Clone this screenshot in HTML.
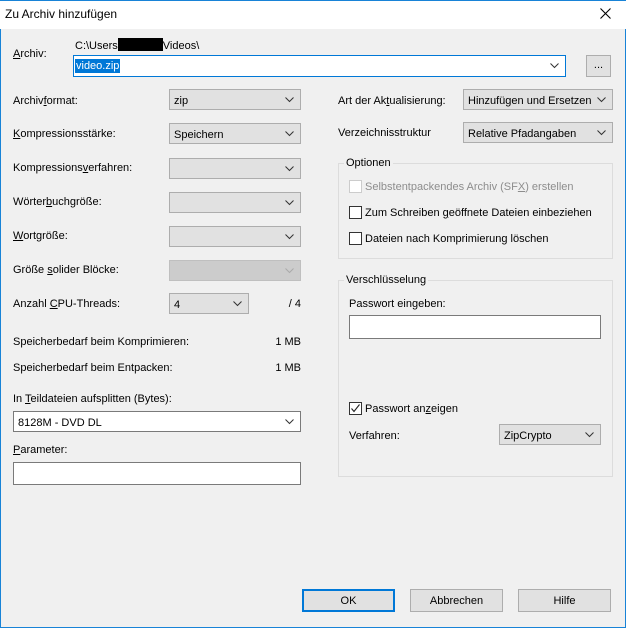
<!DOCTYPE html>
<html><head><meta charset="utf-8"><style>
*{box-sizing:border-box;margin:0;padding:0}
body{width:626px;height:628px;position:relative;background:#f0f0f0;font-family:"Liberation Sans",sans-serif;font-size:11px;color:#000;overflow:hidden}
.win{position:absolute;left:0;top:0;width:626px;height:628px;border:1px solid #1883d7;border-top:none}
.title{position:absolute;left:0;top:0;width:626px;height:29px;background:#fff;border-top:1px solid #1883d7}
.t{position:absolute;line-height:16px;white-space:nowrap}
.cb{position:absolute;height:21px;background:#e1e1e1;border:1px solid #adadad}
.cb span{position:absolute;left:4px;top:4px;line-height:14px}
.cb svg{position:absolute;right:6px;top:7px}
.dis{background:#cccccc;border-color:#bfbfbf}
.white{background:#fff;border-color:#7a7a7a}
.inp{position:absolute;background:#fff;border:1px solid #7a7a7a}
.grp{position:absolute;border:1px solid #dcdcdc}
.chk{position:absolute;width:13px;height:13px;border:1px solid #333;background:#fff}
.btn{position:absolute;height:23px;width:93px;background:#e1e1e1;border:1px solid #adadad;text-align:center;line-height:22px}
u{text-decoration:underline}
</style></head><body>
<div class="win"></div>
<div class="title"></div>
<div class="t" style="left:5px;top:6px;font-size:12px">Zu Archiv hinzufügen</div>
<svg style="position:absolute;left:600px;top:8px" width="11" height="11"><path d="M0.5 0.5L10.5 10.5M10.5 0.5L0.5 10.5" stroke="#000" stroke-width="1.1"/></svg>

<div class="t" style="left:13px;top:46px"><u>A</u>rchiv:</div>
<div class="t" style="left:75px;top:38px">C:\Users<span style="display:inline-block;width:45px;height:13px;background:#000;vertical-align:-2px"></span>Videos\</div>
<div class="inp" style="left:73px;top:55px;width:493px;height:22px;border-color:#0078d7"><span class="t" style="left:1px;top:3px;line-height:14px;background:#0078d7;color:#fff;padding:0 1px">video.zip</span>
<svg style="position:absolute;right:6px;top:7px" width="9" height="6"><path d="M0.5 0.5L4.5 4.5L8.5 0.5" stroke="#333" fill="none"/></svg></div>
<div class="btn" style="left:586px;top:55px;width:25px;height:22px;line-height:18px">...</div>

<div class="t" style="left:13px;top:93px">Archiv<u>f</u>ormat:</div>
<div class="t" style="left:13px;top:126px"><u>K</u>ompressionsstärke:</div>
<div class="t" style="left:13px;top:160px">Kompressions<u>v</u>erfahren:</div>
<div class="t" style="left:13px;top:194px">Wörter<u>b</u>uchgröße:</div>
<div class="t" style="left:13px;top:228px"><u>W</u>ortgröße:</div>
<div class="t" style="left:13px;top:262px">Größe <u>s</u>olider Blöcke:</div>
<div class="t" style="left:13px;top:296px">Anzahl <u>C</u>PU-Threads:</div>
<div class="t" style="left:13px;top:334px">Speicherbedarf beim Komprimieren:</div>
<div class="t" style="left:13px;top:360px">Speicherbedarf beim Entpacken:</div>
<div class="t" style="right:325px;top:334px">1 MB</div>
<div class="t" style="right:325px;top:360px">1 MB</div>
<div class="t" style="left:13px;top:391px">In <u>T</u>eildateien aufsplitten (Bytes):</div>
<div class="t" style="left:13px;top:442px"><u>P</u>arameter:</div>

<div class="cb" style="left:169px;top:89px;width:132px"><span>zip</span><svg width="9" height="6"><path d="M0.5 0.5L4.5 4.5L8.5 0.5" stroke="#333" fill="none"/></svg></div>
<div class="cb" style="left:169px;top:123px;width:132px"><span>Speichern</span><svg width="9" height="6"><path d="M0.5 0.5L4.5 4.5L8.5 0.5" stroke="#333" fill="none"/></svg></div>
<div class="cb" style="left:169px;top:158px;width:132px"><svg width="9" height="6"><path d="M0.5 0.5L4.5 4.5L8.5 0.5" stroke="#333" fill="none"/></svg></div>
<div class="cb" style="left:169px;top:192px;width:132px"><svg width="9" height="6"><path d="M0.5 0.5L4.5 4.5L8.5 0.5" stroke="#333" fill="none"/></svg></div>
<div class="cb" style="left:169px;top:226px;width:132px"><svg width="9" height="6"><path d="M0.5 0.5L4.5 4.5L8.5 0.5" stroke="#333" fill="none"/></svg></div>
<div class="cb dis" style="left:169px;top:260px;width:132px"><svg width="9" height="6"><path d="M0.5 0.5L4.5 4.5L8.5 0.5" stroke="#aaa" fill="none"/></svg></div>
<div class="cb" style="left:169px;top:293px;width:80px"><span>4</span><svg width="9" height="6"><path d="M0.5 0.5L4.5 4.5L8.5 0.5" stroke="#333" fill="none"/></svg></div>
<div class="t" style="right:325px;top:296px">/ 4</div>
<div class="cb white" style="left:13px;top:411px;width:288px"><span>8128M - DVD DL</span><svg width="9" height="6"><path d="M0.5 0.5L4.5 4.5L8.5 0.5" stroke="#333" fill="none"/></svg></div>
<div class="inp" style="left:13px;top:462px;width:288px;height:23px"></div>

<div class="t" style="left:338px;top:93px">Art der Ak<u>t</u>ualisierung:</div>
<div class="t" style="left:338px;top:125px">Verzeichnisstruktur</div>
<div class="cb" style="left:463px;top:89px;width:150px"><span>Hinzufügen und Ersetzen</span><svg width="9" height="6"><path d="M0.5 0.5L4.5 4.5L8.5 0.5" stroke="#333" fill="none"/></svg></div>
<div class="cb" style="left:463px;top:122px;width:150px"><span>Relative Pfadangaben</span><svg width="9" height="6"><path d="M0.5 0.5L4.5 4.5L8.5 0.5" stroke="#333" fill="none"/></svg></div>

<div class="grp" style="left:338px;top:163px;width:275px;height:96px"></div>
<div class="t" style="left:344px;top:155px;background:#f0f0f0;padding:0 2px">Optionen</div>
<div class="chk" style="left:349px;top:180px;border-color:#ccc"></div>
<div class="t" style="left:365px;top:179px;color:#8d8d8d">Selbstentpackendes Archiv (SF<u>X</u>) erstellen</div>
<div class="chk" style="left:349px;top:206px"></div>
<div class="t" style="left:365px;top:205px">Zum Schreiben <u>g</u>eöffnete Dateien einbeziehen</div>
<div class="chk" style="left:349px;top:232px"></div>
<div class="t" style="left:365px;top:231px">Dateien nach Komprimierung löschen</div>

<div class="grp" style="left:338px;top:280px;width:275px;height:197px"></div>
<div class="t" style="left:344px;top:272px;background:#f0f0f0;padding:0 2px">Verschlüsselung</div>
<div class="t" style="left:349px;top:296px">Passwort eingeben:</div>
<div class="inp" style="left:349px;top:315px;width:252px;height:24px"></div>
<div class="chk" style="left:349px;top:402px"><svg width="11" height="11" style="position:absolute;left:0;top:0"><path d="M1.5 5.5L4 8.5L9.5 1.5" stroke="#222" fill="none" stroke-width="1.1"/></svg></div>
<div class="t" style="left:365px;top:401px">Passwort an<u>z</u>eigen</div>
<div class="t" style="left:349px;top:428px">Verfahren:</div>
<div class="cb" style="left:499px;top:424px;width:102px"><span>ZipCrypto</span><svg width="9" height="6"><path d="M0.5 0.5L4.5 4.5L8.5 0.5" stroke="#333" fill="none"/></svg></div>

<div class="btn" style="left:302px;top:589px;border:2px solid #0078d7;line-height:20px">OK</div>
<div class="btn" style="left:410px;top:589px">Abbrechen</div>
<div class="btn" style="left:518px;top:589px">Hilfe</div>
</body></html>
